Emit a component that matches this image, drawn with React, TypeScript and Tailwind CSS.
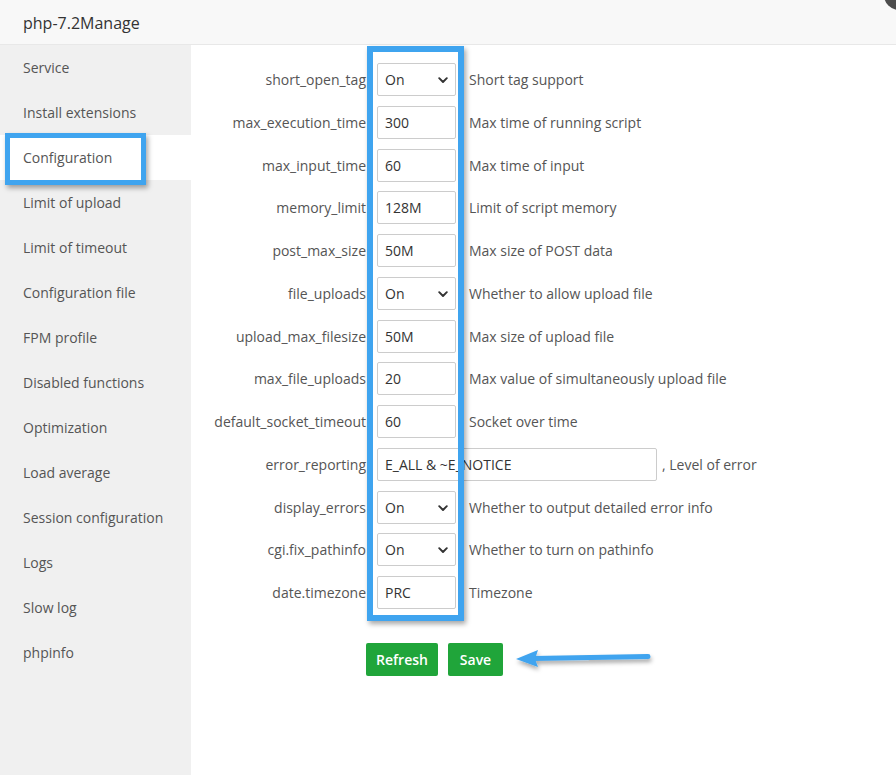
import React from "react";

const menu = [
  "Service",
  "Install extensions",
  "Configuration",
  "Limit of upload",
  "Limit of timeout",
  "Configuration file",
  "FPM profile",
  "Disabled functions",
  "Optimization",
  "Load average",
  "Session configuration",
  "Logs",
  "Slow log",
  "phpinfo",
];

type Row = { name: string; type: "select" | "input" | "wide"; value: string; desc: string };

const rows: Row[] = [
  { name: "short_open_tag", type: "select", value: "On", desc: "Short tag support" },
  { name: "max_execution_time", type: "input", value: "300", desc: "Max time of running script" },
  { name: "max_input_time", type: "input", value: "60", desc: "Max time of input" },
  { name: "memory_limit", type: "input", value: "128M", desc: "Limit of script memory" },
  { name: "post_max_size", type: "input", value: "50M", desc: "Max size of POST data" },
  { name: "file_uploads", type: "select", value: "On", desc: "Whether to allow upload file" },
  { name: "upload_max_filesize", type: "input", value: "50M", desc: "Max size of upload file" },
  { name: "max_file_uploads", type: "input", value: "20", desc: "Max value of simultaneously upload file" },
  { name: "default_socket_timeout", type: "input", value: "60", desc: "Socket over time" },
  { name: "error_reporting", type: "wide", value: "E_ALL & ~E_NOTICE", desc: ", Level of error" },
  { name: "display_errors", type: "select", value: "On", desc: "Whether to output detailed error info" },
  { name: "cgi.fix_pathinfo", type: "select", value: "On", desc: "Whether to turn on pathinfo" },
  { name: "date.timezone", type: "input", value: "PRC", desc: "Timezone" },
];

function Chevron() {
  return (
    <svg width="10" height="7" viewBox="0 0 10 7" className="absolute right-[7px] top-[13px]">
      <path d="M1.2 1.2 L5 5 L8.8 1.2" fill="none" stroke="#333" strokeWidth="1.9" strokeLinecap="round" strokeLinejoin="round" />
    </svg>
  );
}

export default function App() {
  return (
    <div
      className="relative w-[896px] h-[775px] overflow-hidden bg-white text-[14px]"
      style={{ fontFamily: '"Open Sans", "Liberation Sans", Arial, sans-serif' }}
    >
      {/* header */}
      <div className="h-[45px] bg-[#f8f8f8] border-b border-[#e8e8e8] flex items-center pl-[23px] pt-[2px] text-[16px] text-[#333]">
        php-7.2Manage
      </div>
      {/* close circle */}
      <div className="absolute right-[-18px] top-[-20px] w-[30px] h-[30px] rounded-full bg-[#4d4d4d]" />

      <div className="flex h-[730px]">
        {/* sidebar */}
        <div className="w-[191px] bg-[#f0f0f0] flex flex-col">
          {menu.map((m) => (
            <div
              key={m}
              className={`h-[45px] flex items-center pl-[23px] text-[#555] ${m === "Configuration" ? "bg-white" : ""}`}
            >
              {m}
            </div>
          ))}
        </div>

        {/* content */}
        <div className="flex-1 pt-[18px] flex flex-col">
          <div className="flex flex-col gap-[9.75px]">
            {rows.map((r) => (
              <div key={r.name} className="flex items-center h-[33px]">
                <div className="w-[175px] text-right text-[#555] whitespace-nowrap">{r.name}</div>
                <div className="ml-[11px]">
                  {r.type === "wide" ? (
                    <div className="w-[280px] h-[33px] border border-[#ccc] rounded-[2px] flex items-center pl-[7px] text-[#333]">
                      {r.value}
                    </div>
                  ) : (
                    <div className="relative w-[79px] h-[33px] border border-[#ccc] rounded-[2px] flex items-center pl-[7px] text-[#333]">
                      {r.value}
                      {r.type === "select" && <Chevron />}
                    </div>
                  )}
                </div>
                <div className={`${r.type === "wide" ? "ml-[5px]" : "ml-[13px]"} text-[#555] whitespace-nowrap`}>{r.desc}</div>
              </div>
            ))}
          </div>
          <div className="flex gap-[10px] mt-[34px] ml-[175px]">
            <div className="h-[33px] w-[72px] justify-center rounded-[2px] bg-[#20a53a] text-white font-semibold flex items-center">Refresh</div>
            <div className="h-[33px] w-[55px] justify-center rounded-[2px] bg-[#20a53a] text-white font-semibold flex items-center">Save</div>
          </div>
        </div>
      </div>

      {/* annotation: Configuration highlight */}
      <div className="absolute left-[5px] top-[133px] w-[141px] h-[52px] border-[5px] border-[#3fa4ef] shadow-[2px_3px_5px_rgba(0,0,0,0.35)]" />
      {/* annotation: input column highlight */}
      <div className="absolute left-[367px] top-[46px] w-[97px] h-[575px] border-[6px] border-[#3fa4ef] shadow-[2px_3px_5px_rgba(0,0,0,0.35)]" />
      {/* arrow */}
      <svg className="absolute left-[505px] top-[640px]" width="160" height="40" viewBox="0 0 160 40">
        <defs>
          <filter id="sh" x="-10%" y="-50%" width="130%" height="200%">
            <feDropShadow dx="1" dy="3" stdDeviation="2" floodColor="#000" floodOpacity="0.35" />
          </filter>
        </defs>
        <g filter="url(#sh)">
          <path d="M28 18.5 L143 16.5" stroke="#3fa4ef" strokeWidth="5" strokeLinecap="round" fill="none" />
          <path d="M11 19 L33 10 L30 19 L33 27 Z" fill="#3fa4ef" />
        </g>
      </svg>
    </div>
  );
}
